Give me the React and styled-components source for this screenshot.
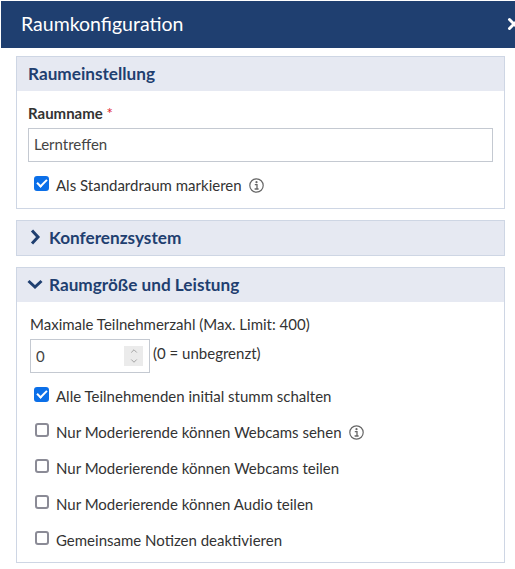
import styled, { createGlobalStyle } from 'styled-components';
import { ChevronDown, ChevronUp, X } from 'lucide-react';

const GlobalStyle = createGlobalStyle`
  html, body {
    margin: 0;
    padding: 0;
    background: #fff;
    overflow: hidden;
  }
  body {
    font-family: Lato, "Open Sans", sans-serif;
    color: #333;
  }
`;

const Page = styled.div`
  width: 515px;
  height: 569px;
  padding-top: 1px;
  padding-left: 1px;
  box-sizing: border-box;
  overflow: hidden;
`;

const Header = styled.header`
  height: 47px;
  background: #1f3f70;
  color: #fff;
  display: flex;
  align-items: center;
  justify-content: space-between;
  padding: 0 0 2px 20px;
  box-sizing: border-box;
  margin-bottom: 8px;
  overflow: hidden;
`;

const HeaderTitle = styled.h1`
  margin: 0;
  font-size: 19.5px;
  font-weight: 400;
`;

const CloseIcon = styled(X)`
  flex: none;
  margin-right: -8px;
`;

const Sections = styled.div`
  display: flex;
  flex-direction: column;
  gap: 11px;
  padding-left: 15px;
  width: 489px;
`;

const Section = styled.section`
  border: 1px solid #ced6e4;
  background: #fff;
`;

const SectionHead = styled.div`
  height: 34px;
  background: #e6e9f2;
  display: flex;
  align-items: center;
  gap: 6px;
  padding: 0 0 2px ${(p) => p.$left || 11}px;
  box-sizing: border-box;
  font-size: 17.2px;
  font-weight: 700;
  color: #1f3f70;
`;

const SectionBody = styled.div`
  padding: ${(p) => p.$padding};
  display: flex;
  flex-direction: column;
`;

const FieldLabel = styled.label`
  font-size: 15px;
  line-height: 18px;
  font-weight: ${(p) => (p.$bold ? 700 : 400)};
  color: #333;
`;

const Required = styled.span`
  color: #e0202a;
  font-weight: 400;
`;

const TextInput = styled.input`
  height: 34px;
  margin-top: 6px;
  padding: 0 5px 3px;
  box-sizing: border-box;
  width: 465px;
  border: 1px solid #c4c9d1;
  border-radius: 0;
  font-family: inherit;
  font-size: 15px;
  color: #444;
  outline: none;
`;

const NumberRow = styled.div`
  display: flex;
  align-items: flex-start;
  gap: 3px;
  margin-top: 6px;
`;

const NumberBox = styled.div`
  width: 120px;
  height: 34px;
  box-sizing: border-box;
  border: 1px solid #c4c9d1;
  display: flex;
  align-items: center;
  justify-content: space-between;
  padding: 0 6px 0 5px;
`;

const NumberInput = styled.input`
  width: 60px;
  border: 0;
  padding: 0 0 1px;
  outline: none;
  font-family: inherit;
  font-size: 15px;
  color: #444;
`;

const Spinner = styled.div`
  width: 19px;
  height: 20px;
  background: #ebebeb;
  color: #777;
  display: flex;
  flex-direction: column;
  align-items: center;
  justify-content: center;
`;

const Hint = styled.span`
  font-size: 15px;
  line-height: 18px;
  color: #333;
  margin-top: 5px;
`;

const CheckRow = styled.label`
  display: flex;
  align-items: center;
  height: 18px;
  margin-top: ${(p) => p.$top || 18}px;
  padding-left: ${(p) => p.$indent}px;
  font-size: 15px;
  color: #333;
`;

const Check = styled.input`
  appearance: none;
  width: 14px;
  height: 14px;
  margin: 0 7px 4px 1px;
  box-sizing: border-box;
  border: 2px solid #8b8b96;
  border-radius: 3px;
  background: #fff;
  flex: none;
  display: grid;
  place-items: center;

  &:checked {
    width: 15px;
    height: 15px;
    margin-left: 0;
    background: #0b6fe8;
    border-color: #0b6fe8;
  }

  &:checked::after {
    content: '';
    width: 4px;
    height: 8px;
    margin-top: -2px;
    border: solid #fff;
    border-width: 0 2px 2px 0;
    transform: rotate(45deg);
  }
`;

const InfoSvg = styled.svg`
  flex: none;
  margin-left: 7px;
  color: #666;
`;

function InfoIcon() {
  return (
    <InfoSvg width="15" height="15" viewBox="0 0 15 15" fill="none" stroke="currentColor">
      <circle cx="7.5" cy="7.5" r="6.7" strokeWidth="1.2" />
      <circle cx="7.5" cy="4.2" r="1.1" fill="currentColor" stroke="none" />
      <path d="M5.8 6.6H8V10.9M5.6 11H9.6" strokeWidth="1.3" />
    </InfoSvg>
  );
}

const ChevronSvg = styled.svg`
  flex: none;
  color: #1f3f70;
`;

function SectionChevron({ open }) {
  return (
    <ChevronSvg width="16" height="16" viewBox="0 0 16 16" fill="none" stroke="currentColor" strokeWidth="3">
      <path d={open ? 'M1.5 5L8 11L14.5 5' : 'M5 1.5L11 8L5 14.5'} />
    </ChevronSvg>
  );
}

const options = [
  { label: 'Alle Teilnehmenden initial stumm schalten', checked: true, top: 14 },
  { label: 'Nur Moderierende können Webcams sehen', info: true },
  { label: 'Nur Moderierende können Webcams teilen' },
  { label: 'Nur Moderierende können Audio teilen' },
  { label: 'Gemeinsame Notizen deaktivieren' },
];

export default function App() {
  return (
    <>
      <GlobalStyle />
      <Page>
        <Header>
          <HeaderTitle>Raumkonfiguration</HeaderTitle>
          <CloseIcon size={18} strokeWidth={4} />
        </Header>
        <Sections>
          <Section>
            <SectionHead>Raumeinstellung</SectionHead>
            <SectionBody $padding="13px 11px 14px">
              <FieldLabel $bold>
                Raumname <Required>*</Required>
              </FieldLabel>
              <TextInput defaultValue="Lerntreffen" />
              <CheckRow $top={14} $indent={6}>
                <Check type="checkbox" defaultChecked />
                Als Standardraum markieren
                <InfoIcon />
              </CheckRow>
            </SectionBody>
          </Section>

          <Section>
            <SectionHead $left={10}>
              <SectionChevron />
              Konferenzsystem
            </SectionHead>
          </Section>

          <Section>
            <SectionHead $left={10}>
              <SectionChevron open />
              Raumgröße und Leistung
            </SectionHead>
            <SectionBody $padding="13px 13px 13px">
              <FieldLabel>Maximale Teilnehmerzahl (Max. Limit: 400)</FieldLabel>
              <NumberRow>
                <NumberBox>
                  <NumberInput defaultValue="0" />
                  <Spinner>
                    <ChevronUp size={12} strokeWidth={1.5} />
                    <ChevronDown size={12} strokeWidth={1.5} />
                  </Spinner>
                </NumberBox>
                <Hint>(0 = unbegrenzt)</Hint>
              </NumberRow>
              {options.map((o) => (
                <CheckRow key={o.label} $top={o.top} $indent={4}>
                  <Check type="checkbox" defaultChecked={o.checked} />
                  {o.label}
                  {o.info && <InfoIcon />}
                </CheckRow>
              ))}
            </SectionBody>
          </Section>
        </Sections>
      </Page>
    </>
  );
}
